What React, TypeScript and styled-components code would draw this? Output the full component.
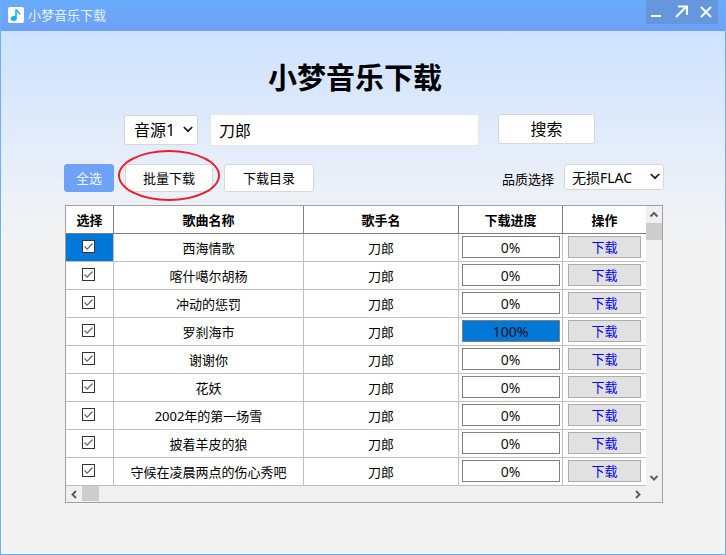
import React from 'react'
import styled, { createGlobalStyle } from 'styled-components'

const FONT = `"Noto Sans", "Noto Sans CJK SC", sans-serif`

const GlobalStyle = createGlobalStyle`
  html, body {
    margin: 0;
    padding: 0;
    background: #f3f3f3;
  }
  * {
    box-sizing: border-box;
  }
`

const Window = styled.div`
  width: 726px;
  height: 555px;
  display: flex;
  flex-direction: column;
  overflow: hidden;
  font-family: ${FONT};
  color: #000;
  border: 1px solid #69b1ff;
  border-top: 0;
`

const TitleBar = styled.div`
  flex: none;
  height: 31px;
  margin: 0 -1px;
  padding: 0 8px;
  display: flex;
  align-items: flex-start;
  background: linear-gradient(to bottom, #6aabfb, #6ea2f6);
`

const AppIcon = styled.svg`
  width: 16px;
  height: 16px;
  margin-top: 7px;
`

const TitleText = styled.div`
  margin-left: 4px;
  font-size: 13px;
  line-height: 30px;
  color: #e8f1ff;
`

const WindowButtons = styled.div`
  margin-left: auto;
  width: 72px;
  height: 24px;
  background: #6597dc;
  display: flex;
  justify-content: center;
  svg {
    width: 24px;
    height: 24px;
  }
`

const Body = styled.div`
  flex: 1;
  min-height: 0;
  position: relative;
  padding-top: 27px;
  background: linear-gradient(to bottom, #cee2ff 0, #e9eff9 145px, #f3f3f3 210px);
`

const Heading = styled.h1`
  margin: 0;
  padding-right: 16px;
  height: 40px;
  text-align: center;
  font-size: 29px;
  line-height: 40px;
  font-weight: 700;
`

const SearchRow = styled.div`
  margin-top: 16px;
  padding-left: 123px;
  display: flex;
  align-items: flex-start;
`

const SelectWrap = styled.div<{ $w: number; $h: number; $top?: number }>`
  position: relative;
  flex: none;
  width: ${(p) => p.$w}px;
  height: ${(p) => p.$h}px;
  margin-top: ${(p) => p.$top ?? 0}px;
`

const Select = styled.select<{ $size: number; $pad: number }>`
  width: 100%;
  height: 100%;
  appearance: none;
  padding: 0 0 0 ${(p) => p.$pad}px;
  font-family: ${FONT};
  font-size: ${(p) => p.$size}px;
  color: #000;
  background: #fff;
  border: 1px solid #d6d6d6;
  border-radius: 3px;
`

const SelectArrow = styled.svg<{ $top: number; $right: number }>`
  position: absolute;
  right: ${(p) => p.$right}px;
  top: ${(p) => p.$top}px;
  width: 10px;
  height: 7px;
  pointer-events: none;
`

const SearchInput = styled.input`
  width: 269px;
  height: 32px;
  margin-left: 12px;
  padding: 0 8px;
  font-family: ${FONT};
  font-size: 16px;
  background: #fff;
  border: 1px solid #e6e6e6;
  outline: none;
`

const Button = styled.button<{ $w: number; $size?: number; $h?: number }>`
  width: ${(p) => p.$w}px;
  height: ${(p) => p.$h ?? 28}px;
  padding: 0 0 2px;
  font-family: ${FONT};
  font-size: ${(p) => p.$size ?? 13}px;
  color: #000;
  background: #fff;
  border: 1px solid #d6d6d6;
  border-radius: 3px;
`

const SearchButton = styled(Button)`
  margin-left: 19px;
`

const Toolbar = styled.div`
  margin-top: 18px;
  padding-left: 63px;
  padding-right: 61px;
  display: flex;
  align-items: flex-start;
  gap: 11px;
`

const PrimaryButton = styled(Button)`
  color: #f2f6ff;
  background: #6ea2f6;
  border-color: #6ea2f6;
`

const QualityLabel = styled.label`
  margin-left: auto;
  margin-right: -1px;
  font-size: 13px;
  line-height: 30px;
`

const Highlight = styled.div`
  position: absolute;
  left: 117px;
  top: 119px;
  width: 102px;
  height: 51px;
  border: 2px solid #e8202c;
  border-radius: 50%;
  pointer-events: none;
`

const TableFrame = styled.div`
  margin: 11px 0 0 64px;
  width: 598px;
  height: 298px;
  display: grid;
  grid-template-columns: 580px 16px;
  grid-template-rows: 280px 16px;
  border: 1px solid #a0a0a0;
  background: #f0f0f0;
`

const Viewport = styled.div`
  overflow: hidden;
  background: #fff;
`

const Row = styled.div<{ $head?: boolean }>`
  height: 28px;
  display: grid;
  grid-template-columns: 48px 190px 155px 104px 83px;
  border-bottom: 1px solid ${(p) => (p.$head ? '#808080' : '#c0c0c0')};
`

const Cell = styled.div<{ $head?: boolean; $active?: boolean }>`
  display: flex;
  align-items: center;
  justify-content: center;
  font-size: 13px;
  font-weight: ${(p) => (p.$head ? 700 : 400)};
  background: ${(p) => (p.$active ? '#0078d7' : 'transparent')};
  border-right: 1px solid ${(p) => (p.$head ? '#808080' : '#c0c0c0')};
  &:last-child {
    border-right: 0;
  }
`

const CheckBox = styled.svg`
  width: 13px;
  height: 13px;
  margin: -3px 2px 0 0;
`

const Progress = styled.div<{ $done?: boolean }>`
  width: 98px;
  height: 22px;
  margin-top: -1px;
  display: flex;
  align-items: center;
  justify-content: center;
  font-size: 14px;
  color: #111;
  border: 1px solid #808080;
  background: ${(p) => (p.$done ? '#0078d7' : '#fff')};
`

const DownloadButton = styled.button`
  width: 73px;
  height: 22px;
  margin-top: -1px;
  margin-right: 1px;
  padding: 0 0 1px 1px;
  font-family: ${FONT};
  font-size: 13px;
  color: #0000ff;
  background: #e1e1e1;
  border: 1px solid #adadad;
`

const VScroll = styled.div`
  display: flex;
  flex-direction: column;
  align-items: stretch;
`

const HScroll = styled.div`
  display: flex;
  align-items: stretch;
`

const Arrow = styled.svg`
  width: 16px;
  height: 17px;
  flex: none;
  display: block;
`

const VThumb = styled.div`
  height: 17px;
  background: #cdcdcd;
`

const HThumb = styled.div`
  width: 17px;
  height: 15px;
  background: #cdcdcd;
`

const ScrollFill = styled.div`
  flex: 1;
`

const songs = [
  '西海情歌',
  '喀什噶尔胡杨',
  '冲动的惩罚',
  '罗刹海市',
  '谢谢你',
  '花妖',
  '2002年的第一场雪',
  '披着羊皮的狼',
  '守候在凌晨两点的伤心秀吧',
]

function Chevron({ points }: { points: string }) {
  return (
    <Arrow viewBox="0 0 16 17">
      <polyline points={points} fill="none" stroke="#606060" strokeWidth="2" />
    </Arrow>
  )
}

function SelectChevron({ top, right }: { top: number; right: number }) {
  return (
    <SelectArrow $top={top} $right={right} viewBox="0 0 10 7">
      <polyline points="0.8,1 5,5.2 9.2,1" fill="none" stroke="#1a1a1a" strokeWidth="1.7" />
    </SelectArrow>
  )
}

export default function App() {
  return (
    <Window>
      <GlobalStyle />
      <TitleBar>
        <AppIcon viewBox="0 0 16 16">
          <rect width="16" height="16" rx="2" fill="#fff" />
          <path d="M8 2.5 V11" stroke="#12b2ee" strokeWidth="1.6" fill="none" />
          <path d="M8.4 2.5 C9 5 11.5 5 12 7.5" stroke="#12b2ee" strokeWidth="1.5" fill="none" />
          <ellipse cx="5.8" cy="11.6" rx="3" ry="2.5" fill="#12b2ee" />
        </AppIcon>
        <TitleText>小梦音乐下载</TitleText>
        <WindowButtons>
          <svg viewBox="0 0 24 24">
            <rect x="5" y="15" width="10" height="2" fill="#fff" />
          </svg>
          <svg viewBox="0 0 24 24">
            <path d="M6 17 L16 7 M8 6.5 H17 V15" stroke="#fff" strokeWidth="2" fill="none" />
          </svg>
          <svg viewBox="0 0 24 24">
            <path d="M7 7 L17 17 M17 7 L7 17" stroke="#fff" strokeWidth="2" fill="none" />
          </svg>
        </WindowButtons>
      </TitleBar>
      <Body>
        <Heading>小梦音乐下载</Heading>
        <SearchRow>
          <SelectWrap $w={74} $h={30} $top={1}>
            <Select $size={16} $pad={9} defaultValue="音源1">
              <option>音源1</option>
              <option>音源2</option>
            </Select>
            <SelectChevron top={11} right={5} />
          </SelectWrap>
          <SearchInput defaultValue="刀郎" />
          <SearchButton $w={97} $h={30} $size={16}>
            搜索
          </SearchButton>
        </SearchRow>
        <Toolbar>
          <PrimaryButton $w={50}>全选</PrimaryButton>
          <Button $w={88}>批量下载</Button>
          <Button $w={90}>下载目录</Button>
          <QualityLabel>品质选择</QualityLabel>
          <SelectWrap $w={100} $h={26}>
            <Select $size={14} $pad={7} defaultValue="无损FLAC">
              <option>无损FLAC</option>
              <option>高品MP3</option>
            </Select>
            <SelectChevron top={9} right={4} />
          </SelectWrap>
        </Toolbar>
        <Highlight />
        <TableFrame>
          <Viewport>
            <Row $head>
              <Cell $head>选择</Cell>
              <Cell $head>歌曲名称</Cell>
              <Cell $head>歌手名</Cell>
              <Cell $head>下载进度</Cell>
              <Cell $head>操作</Cell>
            </Row>
            {songs.map((song, i) => (
              <Row key={song}>
                <Cell $active={i === 0}>
                  <CheckBox viewBox="0 0 13 13">
                    <rect x="0.5" y="0.5" width="12" height="12" fill="#fff" stroke="#333" />
                    <path d="M2.5 6.5 L5.2 9.2 L10.5 3.5" fill="none" stroke="#666" strokeWidth="1.2" />
                  </CheckBox>
                </Cell>
                <Cell>{song}</Cell>
                <Cell>刀郎</Cell>
                <Cell>
                  <Progress $done={i === 3}>{i === 3 ? '100%' : '0%'}</Progress>
                </Cell>
                <Cell>
                  <DownloadButton>下载</DownloadButton>
                </Cell>
              </Row>
            ))}
          </Viewport>
          <VScroll>
            <Chevron points="4.5,10.5 8,7 11.5,10.5" />
            <VThumb />
            <ScrollFill />
            <Chevron points="4.5,7 8,10.5 11.5,7" />
          </VScroll>
          <HScroll>
            <Chevron points="10,5 6.5,8.5 10,12" />
            <HThumb />
            <ScrollFill />
            <Chevron points="6,5 9.5,8.5 6,12" />
          </HScroll>
        </TableFrame>
      </Body>
    </Window>
  )
}
